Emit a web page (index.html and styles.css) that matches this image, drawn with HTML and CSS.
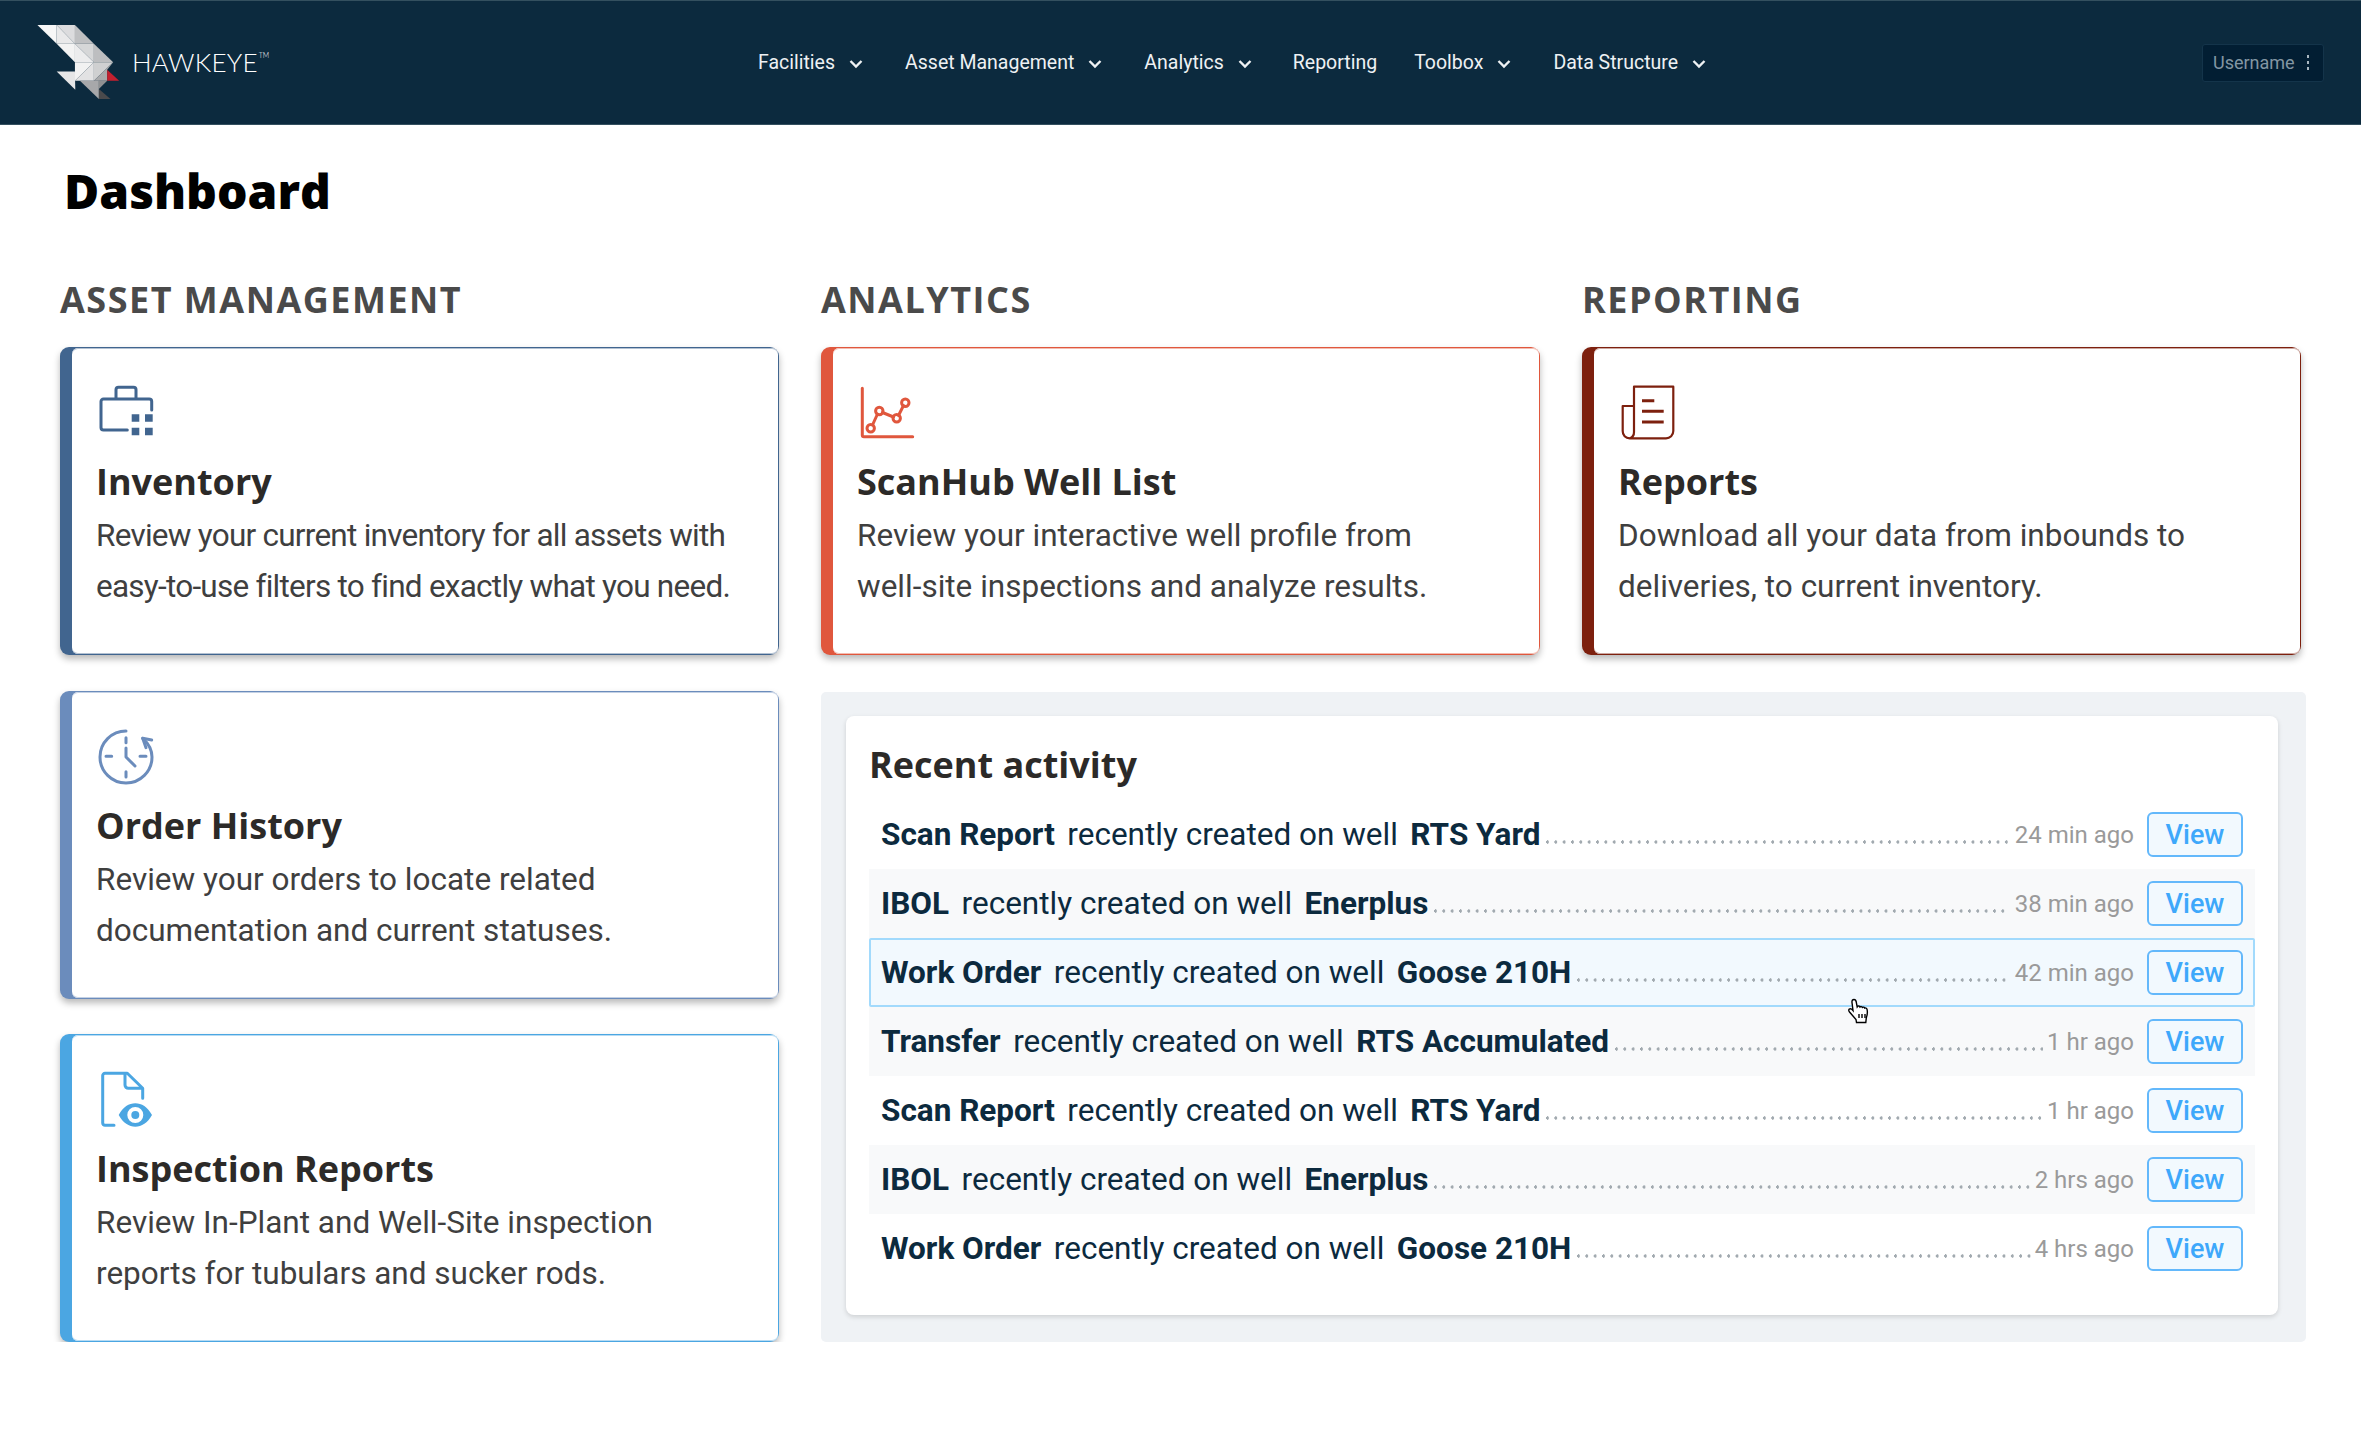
FILE: index.html
```html
<!DOCTYPE html>
<html lang="en">
<head>
<meta charset="utf-8">
<title>Hawkeye Dashboard</title>
<link rel="stylesheet" href="styles.css">
</head>
<body>
<header class="topbar">
  <div class="brand">
    <svg class="logo" viewBox="0 0 360 310" aria-hidden="true">
      <polygon points="112,75 170,75 170,132" fill="#f7f7f7"/>
      <polygon points="170,75 225,75 225,132" fill="#dcdcde"/>
      <polygon points="170,75 225,132 170,132" fill="#e9e9ea"/>
      <polygon points="225,75 282,132 225,132" fill="#bfc0c2"/>
      <polygon points="170,132 225,132 225,187" fill="#f3f3f3"/>
      <polygon points="225,132 282,132 282,187" fill="#d6d7d8"/>
      <polygon points="225,132 282,187 225,187" fill="#ececed"/>
      <polygon points="282,132 340,187 282,187" fill="#bdbec0"/>
      <polygon points="225,187 282,187 225,243" fill="#f2f2f2"/>
      <polygon points="282,187 282,243 225,243" fill="#e2e2e3"/>
      <polygon points="282,187 340,187 282,243" fill="#cfd0d1"/>
      <polygon points="340,187 322,210 322,243 282,243" fill="#a9aaac"/>
      <polygon points="170,215 225,215 226,270" fill="#e6e6e7"/>
      <polygon points="240,243 297,243 297,298" fill="#a7a8aa"/>
      <polygon points="297,243 322,243 297,268" fill="#8f9092"/>
      <polygon points="297,268 332,298 297,298" fill="#4a4a4c"/>
      <polygon points="322,210 358,243 322,243" fill="#c3202f"/>
    </svg>
    <span class="wordmark">HAWKEYE<sup class="tm">TM</sup></span>
  </div>
  <nav class="nav">
    <a class="nav-item">Facilities<svg class="chev" viewBox="0 0 14 10"><path d="M1.500 2l5.500 5.500 5.500-5.500"/></svg></a>
    <a class="nav-item">Asset Management<svg class="chev" viewBox="0 0 14 10"><path d="M1.500 2l5.500 5.500 5.500-5.500"/></svg></a>
    <a class="nav-item">Analytics<svg class="chev" viewBox="0 0 14 10"><path d="M1.500 2l5.500 5.500 5.500-5.500"/></svg></a>
    <a class="nav-item nav-plain">Reporting</a>
    <a class="nav-item">Toolbox<svg class="chev" viewBox="0 0 14 10"><path d="M1.500 2l5.500 5.500 5.500-5.500"/></svg></a>
    <a class="nav-item">Data Structure<svg class="chev" viewBox="0 0 14 10"><path d="M1.500 2l5.500 5.500 5.500-5.500"/></svg></a>
  </nav>
  <div class="user">Username<span class="kebab"><i></i><i></i><i></i></span></div>
</header>

<main class="page">
  <h1 class="page-title">Dashboard</h1>
  <div class="board">
    <h2 class="section">ASSET MANAGEMENT</h2>
    <h2 class="section">ANALYTICS</h2>
    <h2 class="section">REPORTING</h2>

    <article class="card c-navy"><div class="card-body">
      <svg class="icon" viewBox="0 0 56 52">
        <path d="M28.300 45H4.500A2.500 2.500 0 0 1 2 42.500V16.500A2.500 2.500 0 0 1 4.500 14H50.200A2.500 2.500 0 0 1 52.700 16.500V25M17 14V4.800A2.500 2.500 0 0 1 19.500 2.300H34.500A2.500 2.500 0 0 1 37 4.800V14"/>
        <path class="fill" d="M32.700 29.300h7.600v7.400h-7.600zM46 29.300h7.700v7.400H46zM32.700 42.700h7.600v7.600h-7.600zM46 42.700h7.700v7.600H46z"/>
      </svg>
      <h3 class="card-title">Inventory</h3>
      <p class="card-text tight">Review your current inventory for all assets with easy-to-use filters to find exactly what you need.</p>
    </div></article>

    <article class="card c-red"><div class="card-body">
      <svg class="icon" viewBox="0 0 56 52">
        <path d="M2.300 3.300V50a1.700 1.700 0 0 0 1.700 1.700H52.700"/>
        <path d="M12.500 40l5-11M22.500 27.500l11 4.500M38.500 30.500l5-10"/>
        <circle cx="10.700" cy="43.300" r="3.700"/><circle cx="19.300" cy="26" r="3.700"/><circle cx="36.700" cy="33.300" r="3.700"/><circle cx="45.300" cy="17.700" r="3.700"/>
      </svg>
      <h3 class="card-title">ScanHub Well List</h3>
      <p class="card-text">Review your interactive well profile from<br>well-site inspections and analyze results.</p>
    </div></article>

    <article class="card c-maroon"><div class="card-body">
      <svg class="icon icon-thin" viewBox="0 0 56 52">
        <path d="M13 21H1.700V46A7 7 0 0 0 8.700 53.300H45A7.300 7.300 0 0 0 52.300 46V1.700H13V47A6.500 6.500 0 0 1 8.700 53.300"/>
        <path class="thick" d="M21 15.700h12.300M21 26.300h21.700M21 37h21.700"/>
      </svg>
      <h3 class="card-title">Reports</h3>
      <p class="card-text">Download all your data from inbounds to deliveries, to current inventory.</p>
    </div></article>

    <article class="card c-slate"><div class="card-body">
      <svg class="icon" viewBox="0 0 56 52">
        <path d="M27 2A26 26 0 1 0 53 28C53 22 50 15 43.700 9.300"/>
        <path d="M52.700 11L43.700 9.300L47 18.700"/>
        <path d="M27 8.700v5M27 42.700v5.300M7 27.300h5.700M41 27.300h6M27 19v9l9 9"/>
      </svg>
      <h3 class="card-title">Order History</h3>
      <p class="card-text">Review your orders to locate related documentation and current statuses.</p>
    </div></article>

    <section class="panel">
      <div class="activity">
        <h3 class="activity-title">Recent activity</h3>
        <ul class="rows">
          <li class="row"><b>Scan Report</b><span class="mid">recently created on well</span><b>RTS Yard</b><span class="dots"></span><span class="ago">24 min ago</span><a class="btn">View</a></li>
          <li class="row"><b>IBOL</b><span class="mid">recently created on well</span><b>Enerplus</b><span class="dots"></span><span class="ago">38 min ago</span><a class="btn">View</a></li>
          <li class="row row-hover"><b>Work Order</b><span class="mid">recently created on well</span><b>Goose 210H</b><span class="dots"></span><span class="ago">42 min ago</span><a class="btn">View</a>
            <svg class="cursor" viewBox="0 0 24 26"><path d="M7 1.500c1.500 0 2 1 2.200 2.500l1 5 .6-.8c1-.5 2 0 2.200.8.800-.8 2-.5 2.400.4.800-.6 2-.2 2.300.6.800-.3 2 .2 2.300 1.200.6 2.500.3 6-.7 8.500l-.5 4.800H9.500l-.5-3L2.500 14c-1-1.200-1-2.500 0-3 1-.6 2.200 0 3.500 1.500L5 4.500C4.800 2.500 5.500 1.500 7 1.500z"/><path d="M12 16v4M15 16v4M18 16v4"/></svg>
          </li>
          <li class="row"><b>Transfer</b><span class="mid">recently created on well</span><b>RTS Accumulated</b><span class="dots near"></span><span class="ago">1 hr ago</span><a class="btn">View</a></li>
          <li class="row"><b>Scan Report</b><span class="mid">recently created on well</span><b>RTS Yard</b><span class="dots near"></span><span class="ago">1 hr ago</span><a class="btn">View</a></li>
          <li class="row"><b>IBOL</b><span class="mid">recently created on well</span><b>Enerplus</b><span class="dots near"></span><span class="ago">2 hrs ago</span><a class="btn">View</a></li>
          <li class="row"><b>Work Order</b><span class="mid">recently created on well</span><b>Goose 210H</b><span class="dots near"></span><span class="ago">4 hrs ago</span><a class="btn">View</a></li>
        </ul>
      </div>
    </section>

    <article class="card c-sky"><div class="card-body">
      <svg class="icon" viewBox="0 0 56 52">
        <path d="M15 53.300H6A2.300 2.300 0 0 1 3.700 51V3.600A2.300 2.300 0 0 1 6 1.300H28.300L43.700 16.300V26.300M26 1.300V13A3.300 3.300 0 0 0 29.300 16.300H43.700"/>
        <path class="fill" fill-rule="evenodd" d="M19.700 43C24 35 30 31.300 36.300 31.300S48.600 35 53 43C48.600 51 42.600 54.700 36.300 54.700S24 51 19.700 43zM36.300 35a8 8 0 1 0 0 16 8 8 0 0 0 0-16z"/>
        <circle class="fill" cx="36.300" cy="43" r="4"/>
      </svg>
      <h3 class="card-title">Inspection Reports</h3>
      <p class="card-text">Review In-Plant and Well-Site inspection reports for tubulars and sucker rods.</p>
    </div></article>
  </div>
</main>
</body>
</html>
```
FILE: styles.css
```css
* { box-sizing: border-box; }
html, body { margin: 0; padding: 0; background: #fff; }
body { font-family: Roboto, "Liberation Sans", sans-serif; }

.topbar {
  height: 125px;
  background: #0c2a3e;
  border-top: 1px solid #34505f;
  border-bottom: 1px solid #34505f;
  display: flex;
  align-items: center;
  position: relative;
}
.brand { display: flex; align-items: center; width: 758px; flex: none; }
.logo { width: 120px; height: 103px; margin-top: -22px; flex: none; }
.wordmark {
  font-family: Lato, "Open Sans", sans-serif;
  font-weight: 300;
  font-size: 26px;
  color: #fff;
  margin-left: 12px;
  margin-top: -2px;
  letter-spacing: .2px;
}
.tm { font-size: 7px; vertical-align: 14px; line-height: 0; letter-spacing: 0; margin-left: 1px; }

.nav { display: flex; align-items: center; gap: 42px; flex: none; }
.nav-item { font-size: 19.500px; color: #eef1f3; display: flex; align-items: center; gap: 14px; white-space: nowrap; }
.nav-plain { margin-left: -1px; margin-right: -5px; }
.chev { width: 14px; height: 10px; flex: none; margin-top: 2px; }
.chev path { fill: none; stroke: #eef1f3; stroke-width: 2.400; }

.user {
  margin-left: auto;
  margin-right: 37px;
  width: 122px;
  height: 38px;
  background: #021e33;
  border: 1px solid #14344a;
  border-radius: 3px;
  color: #8396a3;
  font-size: 18px;
  display: flex;
  align-items: center;
  padding-left: 10px;
  gap: 12px;
}
.kebab { display: flex; flex-direction: column; gap: 3px; }
.kebab i { display: block; width: 2px; height: 3px; background: #a9b6c0; }

.page { padding: 0 60px; }
.page-title {
  margin: 0;
  padding: 34px 0 0 4px;
  font-family: "Open Sans", sans-serif;
  font-weight: 800;
  font-size: 48px;
  line-height: 64px;
  color: #000;
}

.board {
  margin-top: 59px;
  display: grid;
  grid-template-columns: 719px 719px 719px;
  grid-template-rows: 30px 308px 308px 309px;
  column-gap: 42px;
  row-gap: 35px;
}
.section {
  margin: 0;
  height: 30px;
  font-family: "Open Sans", sans-serif;
  font-weight: 700;
  font-size: 36px;
  line-height: 36px;
  letter-spacing: 1.500px;
  color: #4a4a4a;
}

.card {
  background: var(--accent);
  border-radius: 9px;
  padding: 1px 1px 1px 12px;
  box-shadow: 0 4px 7px rgba(0, 0, 0, .28);
}
.card-body {
  height: 100%;
  background: #fff;
  border-radius: 6px;
  padding: 37px 20px 0 24px;
  box-shadow: inset 0 1px 0 color-mix(in srgb, var(--accent) 40%, #fff), inset 0 -1px 0 color-mix(in srgb, var(--accent) 40%, #fff);
}
.c-navy { --accent: #41658f; }
.c-red { --accent: #e0573d; }
.c-maroon { --accent: #7d200e; }
.c-slate { --accent: #6b8cbc; margin-top: 1px; margin-bottom: -1px; }
.c-sky { --accent: #4ba6e2; margin-top: 1px; }

.icon { display: block; width: 56px; height: 52px; margin-left: 3px; overflow: visible; }
.icon path, .icon circle { fill: none; stroke: var(--accent); stroke-width: 3; stroke-linecap: round; stroke-linejoin: round; }
.icon .fill { fill: var(--accent); stroke: none; }
.icon-thin path { stroke-width: 2.200; }
.icon-thin .thick { stroke-width: 3; stroke-linecap: butt; }

.card-title {
  margin: 21px 0 0;
  font-family: "Open Sans", sans-serif;
  font-weight: 700;
  font-size: 36px;
  line-height: 48px;
  color: #2c2a28;
}
.card-text {
  margin: 4px 0 0;
  font-size: 31.500px;
  line-height: 51px;
  color: #3f3f3f;
}
.card-text.tight { letter-spacing: -.75px; }

.panel {
  grid-column: 2 / 4;
  grid-row: 3 / 5;
  margin: 2px -5px 0 0;
  background: #eff2f5;
  border-radius: 5px;
  padding: 24px 28px 27px 25px;
}
.activity {
  height: 100%;
  background: #fff;
  border-radius: 8px;
  box-shadow: 0 2px 5px rgba(0, 0, 0, .14);
  padding: 25px 23px 0 23px;
}
.activity-title {
  margin: 0 0 11px;
  font-family: "Open Sans", sans-serif;
  font-weight: 700;
  font-size: 36px;
  line-height: 48px;
  color: #2c2a28;
}
.rows { list-style: none; margin: 0; padding: 0; }
.row {
  height: 69px;
  display: flex;
  align-items: center;
  padding: 0 12px;
  font-size: 31.500px;
  color: #0c2a3e;
  position: relative;
  white-space: nowrap;
}
.row:nth-child(even) { background: #f8f9fa; }
.row b { font-weight: 700; }
.mid { margin: 0 12.500px; }
.row.row-hover { background: #f2f9fe; box-shadow: inset 0 0 0 2px #a2dafc; border-radius: 2px; z-index: 1; }
.dots {
  flex: 1;
  height: 4px;
  margin: 14px 7px 0 6px;
  background-image: radial-gradient(circle at 1.500px 2px, #a2aab0 1.500px, transparent 1.800px);
  background-size: 8.350px 4px;
  background-repeat: repeat-x;
}
.dots.near { margin-right: 4px; }
.ago { font-size: 24px; color: #9a9a9a; }
.btn {
  margin-left: 13px;
  width: 96px;
  height: 45px;
  display: flex;
  align-items: center;
  justify-content: center;
  background: #f2f9fe;
  border: 2px solid #63b8fb;
  border-radius: 6px;
  color: #3ea8fb;
  font-size: 27px;
  font-weight: 500;
}
.cursor { position: absolute; left: 978px; top: 60px; width: 24px; height: 26px; }
.cursor path { fill: #fff; stroke: #000; stroke-width: 1.400; }
```
